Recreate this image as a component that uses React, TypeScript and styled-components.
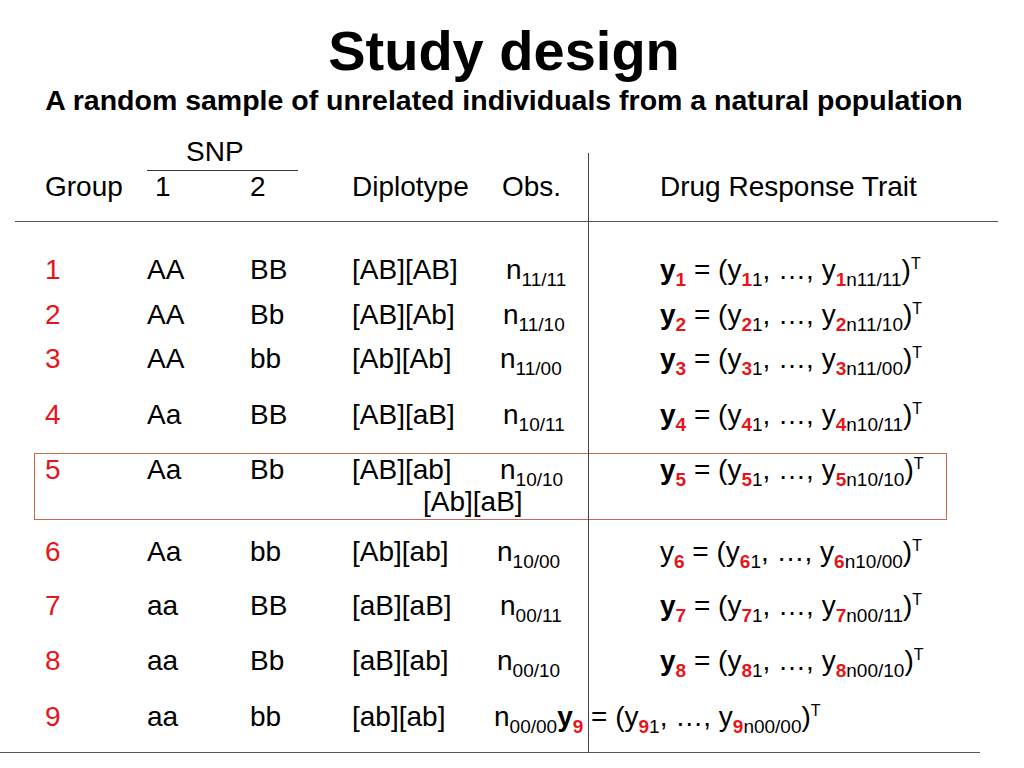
import React from 'react';
import styled, { createGlobalStyle, css } from 'styled-components';

const COLS = '102px 103px 102px 142px 166px 1fr';
const RED = '#e8141c';

const GlobalStyle = createGlobalStyle`
  html, body { margin: 0; padding: 0; background: #fff; }
  body {
    font-family: "Liberation Sans", Arial, Helvetica, sans-serif;
    color: #000;
  }
`;

const Slide = styled.div`
  width: 1024px;
  height: 768px;
  overflow: hidden;
  background: #fff;
  box-sizing: border-box;
  padding-top: 19px;
  display: flex;
  flex-direction: column;
`;

const TitleBlock = styled.header`
  padding-right: 16px;
  text-align: center;
`;

const Title = styled.h1`
  margin: 0;
  font-size: 56px;
  line-height: 64px;
  font-weight: bold;
`;

const Subtitle = styled.h2`
  margin: 1px 0 0;
  font-size: 28.5px;
  line-height: 32px;
  font-weight: bold;
  white-space: nowrap;
`;

const TableWrap = styled.section`
  position: relative;
  margin-top: 20px;
  font-size: 28px;
`;

const Header = styled.div`
  display: grid;
  grid-template-columns: ${COLS};
  margin-left: 15px;
  width: 983px;
  box-sizing: border-box;
  padding: 0 0 18px 30px;
  border-bottom: 1px solid #555;
  line-height: 32px;
  white-space: nowrap;
`;

const SnpLabel = styled.div`
  grid-column: 2 / span 2;
  grid-row: 1;
  width: 151px;
  box-sizing: border-box;
  padding: 0 0 2px 39px;
  border-bottom: 1px solid #333;
`;

const HeadCell = styled.div<{ $pad?: number }>`
  grid-row: 2;
  padding-left: ${(p) => p.$pad ?? 0}px;
`;

const Body = styled.div`
  display: flex;
  flex-direction: column;
  width: 980px;
  padding-bottom: 19px;
  border-bottom: 1px solid #555;
`;

const Row = styled.div<{ $top: number; $boxed?: boolean }>`
  display: grid;
  grid-template-columns: ${COLS};
  margin: ${(p) => p.$top}px 0 0 34px;
  width: 913px;
  box-sizing: border-box;
  padding-left: 11px;
  line-height: 32px;
  white-space: nowrap;
  ${(p) =>
    p.$boxed &&
    css`
      height: 67px;
      padding-top: 3px;
      line-height: 28px;
      outline: 1px solid #c46c4a;
      outline-offset: -1px;
    `}
`;

const GroupNum = styled.div`
  color: ${RED};
`;

const Cell = styled.div``;

const ObsCell = styled.div<{ $pad: number; $wide?: boolean }>`
  padding-left: ${(p) => p.$pad}px;
  ${(p) => p.$wide && css`grid-column: span 2;`}
`;

const Continuation = styled.div`
  grid-column: 4 / span 2;
  padding-left: 71px;
`;

const Y = styled.span<{ $bold?: boolean }>`
  font-weight: ${(p) => (p.$bold ? 'bold' : 'normal')};
`;

const Sub = styled.span<{ $red?: boolean }>`
  font-size: 19px;
  line-height: 0;
  position: relative;
  top: 7px;
  ${(p) =>
    p.$red &&
    css`
      color: ${RED};
      font-weight: bold;
    `}
`;

const Sup = styled.span`
  font-size: 16px;
  line-height: 0;
  position: relative;
  top: -10px;
`;

const VRule = styled.div`
  position: absolute;
  left: 588px;
  top: 17px;
  bottom: 0;
  width: 1px;
  background: #444;
`;

type RowData = {
  g: number;
  s1: string;
  s2: string;
  dip: string;
  obs: string;
  pad: number;
  top: number;
  bold: boolean;
  boxed?: boolean;
  extra?: string;
  inline?: boolean;
};

const rows: RowData[] = [
  { g: 1, s1: 'AA', s2: 'BB', dip: '[AB][AB]', obs: '11/11', pad: 12, top: 32, bold: true },
  { g: 2, s1: 'AA', s2: 'Bb', dip: '[AB][Ab]', obs: '11/10', pad: 9, top: 13, bold: true },
  { g: 3, s1: 'AA', s2: 'bb', dip: '[Ab][Ab]', obs: '11/00', pad: 6, top: 12, bold: true },
  { g: 4, s1: 'Aa', s2: 'BB', dip: '[AB][aB]', obs: '10/11', pad: 9, top: 24, bold: true },
  { g: 5, s1: 'Aa', s2: 'Bb', dip: '[AB][ab]', obs: '10/10', pad: 6, top: 22, bold: true, boxed: true, extra: '[Ab][aB]' },
  { g: 6, s1: 'Aa', s2: 'bb', dip: '[Ab][ab]', obs: '10/00', pad: 3, top: 16, bold: false },
  { g: 7, s1: 'aa', s2: 'BB', dip: '[aB][aB]', obs: '00/11', pad: 6, top: 22, bold: true },
  { g: 8, s1: 'aa', s2: 'Bb', dip: '[aB][ab]', obs: '00/10', pad: 3, top: 23, bold: true },
  { g: 9, s1: 'aa', s2: 'bb', dip: '[ab][ab]', obs: '00/00', pad: 0, top: 24, bold: true, inline: true },
];

function Trait({ i, obs, bold }: { i: number; obs: string; bold: boolean }) {
  return (
    <>
      <Y $bold={bold}>y</Y>
      <Sub $red>{i}</Sub> = (y<Sub $red>{i}</Sub>
      <Sub>1</Sub>, …, y<Sub $red>{i}</Sub>
      <Sub>n{obs}</Sub>)<Sup>T</Sup>
    </>
  );
}

export default function App() {
  return (
    <>
      <GlobalStyle />
      <Slide>
        <TitleBlock>
          <Title>Study design</Title>
          <Subtitle>A random sample of unrelated individuals from a natural population</Subtitle>
        </TitleBlock>
        <TableWrap>
          <Header>
            <SnpLabel>SNP</SnpLabel>
            <HeadCell>Group</HeadCell>
            <HeadCell $pad={8}>1</HeadCell>
            <HeadCell>2</HeadCell>
            <HeadCell>Diplotype</HeadCell>
            <HeadCell $pad={8}>Obs.</HeadCell>
            <HeadCell>Drug Response Trait</HeadCell>
          </Header>
          <Body>
            {rows.map((r) => (
              <Row key={r.g} $top={r.top} $boxed={r.boxed}>
                <GroupNum>{r.g}</GroupNum>
                <Cell>{r.s1}</Cell>
                <Cell>{r.s2}</Cell>
                <Cell>{r.dip}</Cell>
                {r.inline ? (
                  <ObsCell $pad={r.pad} $wide>
                    n<Sub>{r.obs}</Sub>
                    <Trait i={r.g} obs={r.obs} bold={r.bold} />
                  </ObsCell>
                ) : (
                  <>
                    <ObsCell $pad={r.pad}>
                      n<Sub>{r.obs}</Sub>
                    </ObsCell>
                    <Cell>
                      <Trait i={r.g} obs={r.obs} bold={r.bold} />
                    </Cell>
                  </>
                )}
                {r.extra && <Continuation>{r.extra}</Continuation>}
              </Row>
            ))}
          </Body>
          <VRule />
        </TableWrap>
      </Slide>
    </>
  );
}
